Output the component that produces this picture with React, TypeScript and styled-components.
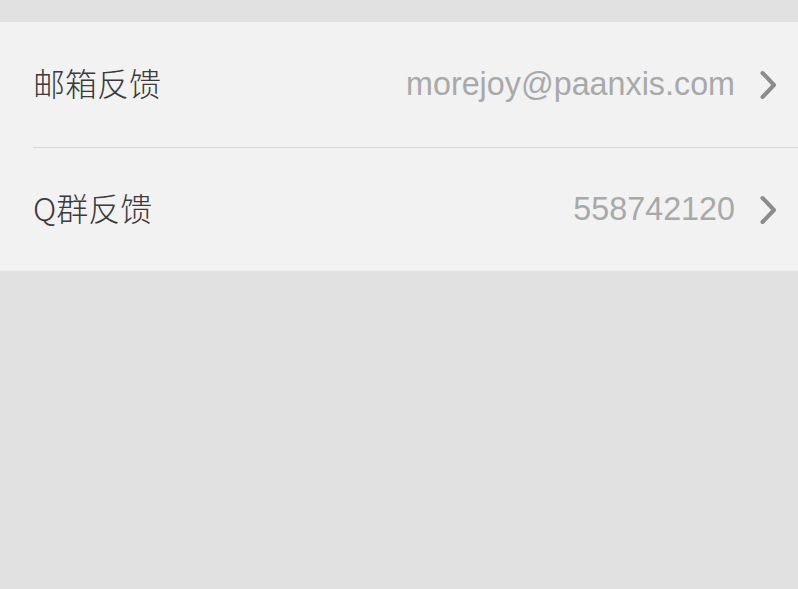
import React from "react";
import styled, { createGlobalStyle } from "styled-components";

const Global = createGlobalStyle`
  html, body { margin: 0; padding: 0; background: #e1e1e1; }
  body { font-family: "Liberation Sans", "Noto Sans CJK SC", sans-serif; }
`;

const Page = styled.div`
  width: 798px;
  height: 589px;
  background: #e1e1e1;
  padding-top: 22px;
  box-sizing: border-box;
`;

const Card = styled.div`
  background: #f2f2f2;
  padding-left: 33px;
`;

const Row = styled.div<{ $divider?: boolean }>`
  display: flex;
  align-items: center;
  height: ${(p) => (p.$divider ? "125px" : "123px")};
  padding-right: 20px;
  border-bottom: ${(p) => (p.$divider ? "1px solid #d8d8d8" : "none")};
`;

const Label = styled.span`
  flex: 1;
  font-family: "Noto Sans CJK SC", "Liberation Sans", sans-serif;
  font-size: 32px;
  font-weight: 300;
  color: #3a3a3a;
  padding-bottom: 6px;
`;

const Value = styled.span`
  font-family: "Liberation Sans", sans-serif;
  font-size: 32.3px;
  color: #a9a9a9;
  margin-right: 24px;
`;

const Chevron = () => (
  <svg width="19" height="30" viewBox="0 0 19 30">
    <path d="M3.5 3 L15 15 L3.5 27" fill="none" stroke="#8c8c8c" strokeWidth="4" strokeLinecap="round" strokeLinejoin="round" />
  </svg>
);

export default function App() {
  return (
    <Page>
      <Global />
      <Card>
        <Row $divider>
          <Label>邮箱反馈</Label>
          <Value>morejoy@paanxis.com</Value>
          <Chevron />
        </Row>
        <Row>
          <Label>Q群反馈</Label>
          <Value>558742120</Value>
          <Chevron />
        </Row>
      </Card>
    </Page>
  );
}
